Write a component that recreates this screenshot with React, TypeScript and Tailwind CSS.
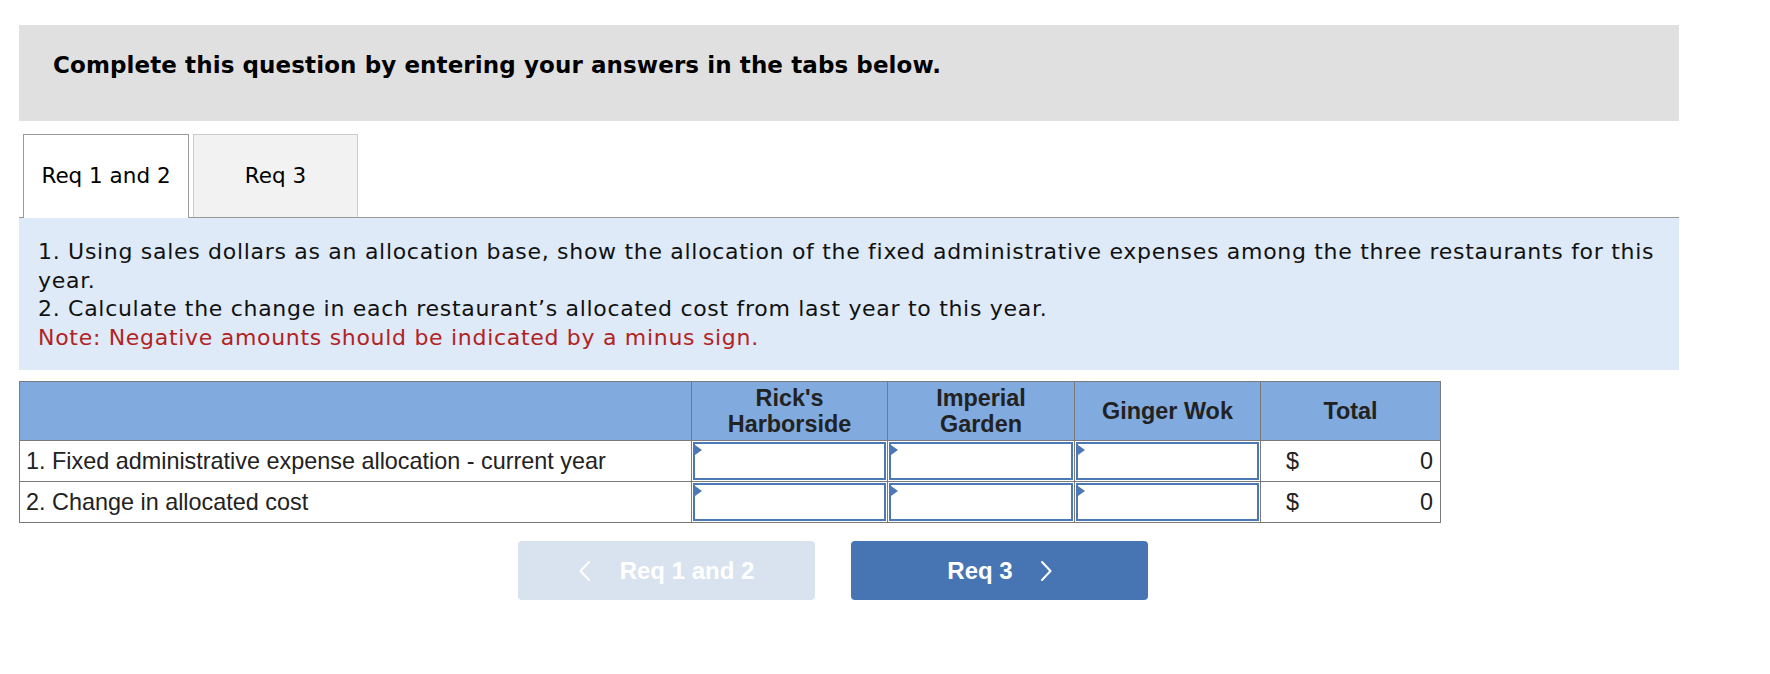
import React from "react";

const verdana = { fontFamily: '"DejaVu Sans", Verdana, sans-serif' };
const arial = { fontFamily: '"Liberation Sans", Arial, sans-serif' };

function InputCell() {
  return (
    <td className="border border-[#7a7a7a] p-[1px]">
      <div className="relative h-[38px] border-2 border-[#4c78b5] bg-white">
        <div className="absolute left-0 top-[1px] h-0 w-0 border-y-[5px] border-l-[7px] border-y-transparent border-l-[#4c78b5]" />
      </div>
    </td>
  );
}

function Chevron({ dir }: { dir: "left" | "right" }) {
  return (
    <svg width="11" height="20" viewBox="0 0 11 20" fill="none">
      <polyline
        points={dir === "left" ? "10,1 1.5,10 10,19" : "1,1 9.5,10 1,19"}
        stroke="white"
        strokeWidth="2"
        strokeLinecap="round"
        strokeLinejoin="round"
      />
    </svg>
  );
}

export default function App() {
  const rows = [
    "1. Fixed administrative expense allocation - current year",
    "2. Change in allocated cost",
  ];
  return (
    <div className="min-h-[674px] bg-white pl-[19px] pt-[25px]">
      <div className="w-[1660px]">
        <div className="h-[96px] bg-[#e0e0e0] pl-[34px] pt-[27px]">
          <div className="text-[23px] font-bold leading-[26px] tracking-[0.1px] text-black" style={verdana}>
            Complete this question by entering your answers in the tabs below.
          </div>
        </div>

        <div className="mt-[13px] flex h-[84px] items-start border-b border-[#999]">
          <div
            className="ml-[4px] flex h-[84px] w-[166px] items-center justify-center border border-b-0 border-[#999] bg-white text-[21.5px] text-black"
            style={verdana}
          >
            Req 1 and 2
          </div>
          <div
            className="ml-[4px] flex h-[83px] w-[165px] items-center justify-center border border-b-0 border-[#ccc] bg-[#f2f2f2] text-[21.5px] text-black"
            style={verdana}
          >
            Req 3
          </div>
        </div>

        <div
          className="h-[152px] bg-[#deeaf7] pl-[19px] pr-[20px] pt-[20px] text-[22px] leading-[28.5px] tracking-[0.7px] text-[#111]"
          style={verdana}
        >
          <div>
            1. Using sales dollars as an allocation base, show the allocation of the fixed administrative expenses among the three restaurants for this year.
          </div>
          <div>2. Calculate the change in each restaurant’s allocated cost from last year to this year.</div>
          <div className="text-[#b22222]">Note: Negative amounts should be indicated by a minus sign.</div>
        </div>

        <table
          className="mt-[11px] w-[1421px] table-fixed border-collapse text-[23.4px] text-[#222]"
          style={arial}
        >
          <colgroup>
            <col className="w-[672px]" />
            <col className="w-[196px]" />
            <col className="w-[187px]" />
            <col className="w-[186px]" />
            <col className="w-[180px]" />
          </colgroup>
          <thead>
            <tr className="h-[59px] bg-[#81aade]">
              <th className="border border-[#7a7a7a]" />
              <th className="border border-[#7a7a7a] text-center font-bold leading-[26px]">
                Rick's
                <br />
                Harborside
              </th>
              <th className="border border-[#7a7a7a] text-center font-bold leading-[26px]">
                Imperial
                <br />
                Garden
              </th>
              <th className="border border-[#7a7a7a] text-center font-bold leading-[26px]">Ginger Wok</th>
              <th className="border border-[#7a7a7a] text-center font-bold leading-[26px]">Total</th>
            </tr>
          </thead>
          <tbody>
            {rows.map((r) => (
              <tr key={r} className="h-[41px]">
                <td className="border border-[#7a7a7a] pl-[6px] leading-[26px]">{r}</td>
                <InputCell />
                <InputCell />
                <InputCell />
                <td className="border border-[#7a7a7a] pl-[25px] pr-[7px]">
                  <div className="flex justify-between leading-[26px]">
                    <span>$</span>
                    <span>0</span>
                  </div>
                </td>
              </tr>
            ))}
          </tbody>
        </table>

        <div className="ml-[499px] mt-[18px] flex gap-[36px]" style={arial}>
          <button className="flex h-[59px] w-[297px] items-center justify-center gap-[30px] rounded-[4px] bg-[#d9e3ef] text-[24px] font-bold text-white">
            <Chevron dir="left" />
            <span>Req 1 and 2</span>
          </button>
          <button className="flex h-[59px] w-[297px] items-center justify-center gap-[28px] rounded-[4px] bg-[#4775b3] text-[24px] font-bold text-white">
            <span>Req 3</span>
            <Chevron dir="right" />
          </button>
        </div>
      </div>
    </div>
  );
}
